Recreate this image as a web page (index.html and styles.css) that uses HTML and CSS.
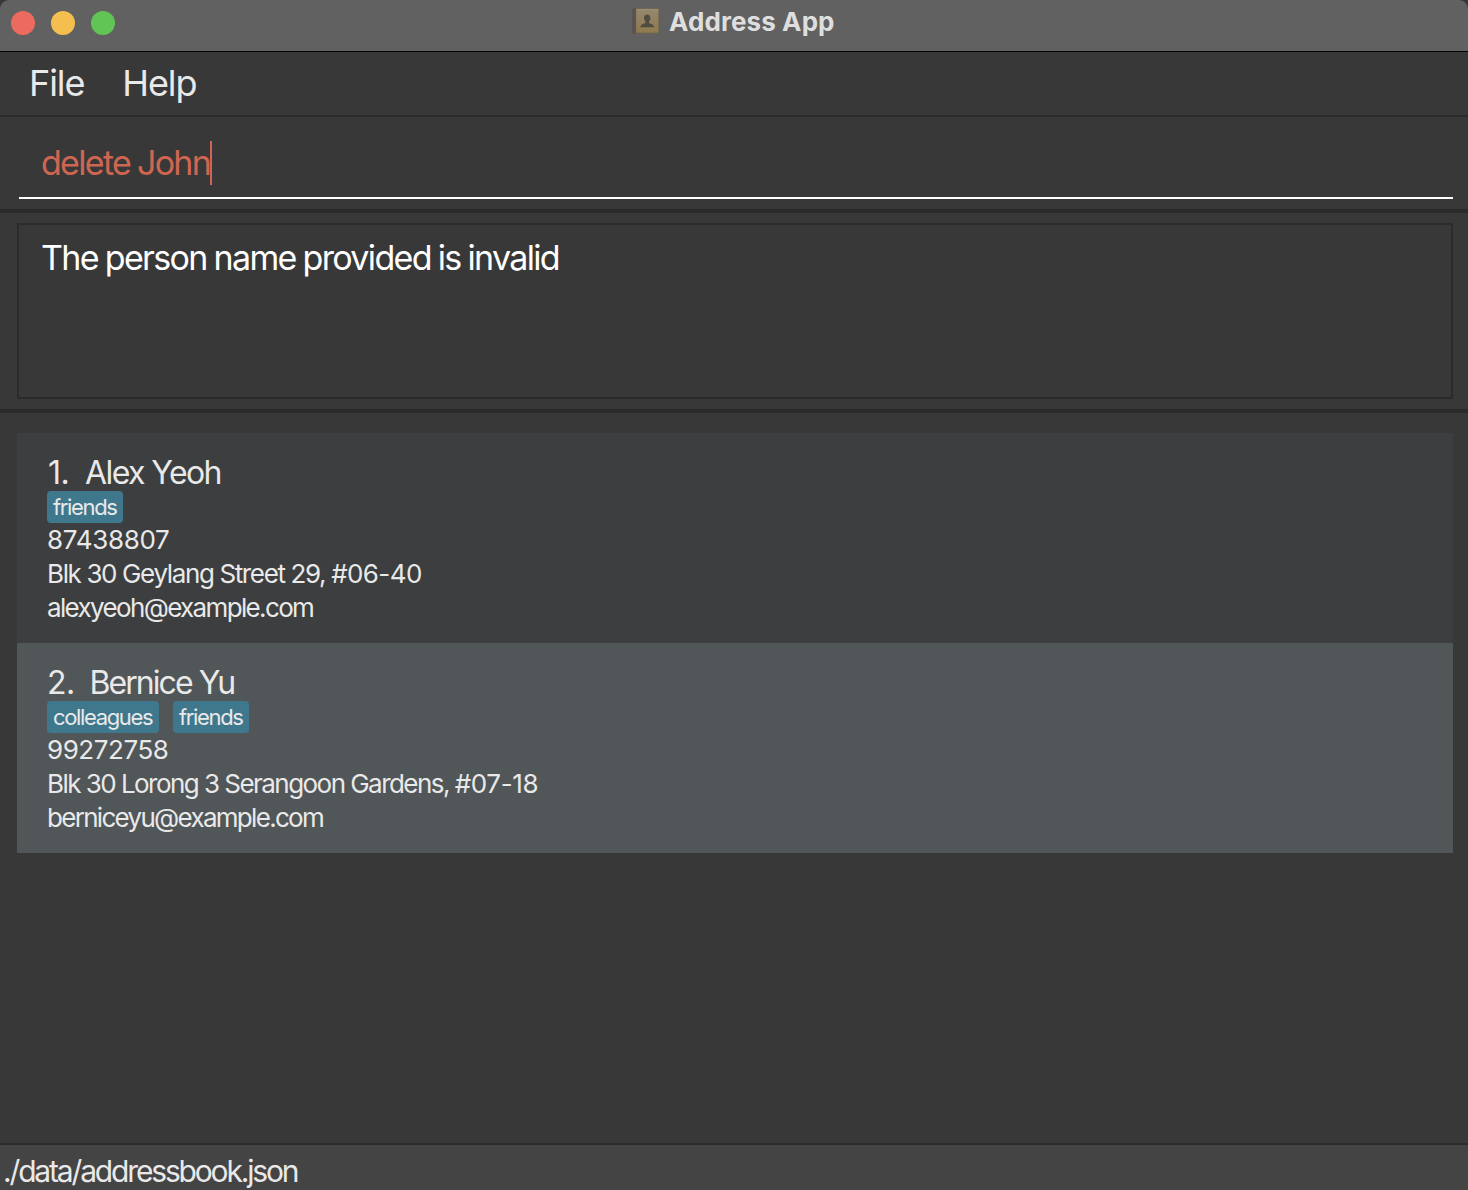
FILE: index.html
```html
<!DOCTYPE html>
<html lang="en">
<head>
<meta charset="utf-8">
<title>Address App</title>
<link rel="stylesheet" href="styles.css">
</head>
<body>
<div class="window">
  <header class="titlebar">
    <div class="lights"><span class="light close"></span><span class="light minimise"></span><span class="light zoom"></span></div>
    <svg class="app-icon" width="28" height="26" viewBox="0 0 28 26">
      <defs><linearGradient id="cover" x1="0" y1="0" x2="0" y2="1"><stop offset="0" stop-color="#978a70"/><stop offset="1" stop-color="#937b4e"/></linearGradient></defs>
      <rect x="0" y="0.3" width="7" height="25.4" rx="1.5" fill="#5b5350"/>
      <rect x="4" y="0.3" width="23" height="25.2" rx="1" fill="#75694f"/>
      <rect x="4.2" y="1.2" width="22" height="23.3" rx="0.6" fill="url(#cover)"/>
      <rect x="4.2" y="1.2" width="22" height="1" fill="#a1977f"/>
      <path d="M15.200 6.500c2 0 3.200 1.400 3.200 3.400 0 1.600-.7 2.800-1.500 3.600v1.300c.5 1 4.900 1.100 5.200 4.500H8.300c.3-3.400 4.700-3.500 5.200-4.500v-1.300c-.8-.8-1.500-2-1.500-3.600 0-2 1.200-3.400 3.200-3.400z" fill="#514b41"/>
    </svg>
    <h1 class="title">Address App</h1>
  </header>
  <nav class="menubar"><span>File</span><span>Help</span></nav>
  <section class="command"><div class="field"><span class="entry">delete John</span><span class="caret"></span></div></section>
  <section class="result"><div class="message">The person name provided is invalid</div></section>
  <main class="people">
    <article class="card">
      <h2 class="name"><span class="index">1.</span><span>Alex Yeoh</span></h2>
      <div class="tags"><span class="tag">friends</span></div>
      <p class="phone">87438807</p>
      <p class="address">Blk 30 Geylang Street 29, <span class="unit">#06-40</span></p>
      <p class="email">alexyeoh@example.com</p>
    </article>
    <article class="card even">
      <h2 class="name"><span class="index">2.</span><span>Bernice Yu</span></h2>
      <div class="tags"><span class="tag colleagues">colleagues</span><span class="tag">friends</span></div>
      <p class="phone">99272758</p>
      <p class="address">Blk 30 Lorong 3 Serangoon Gardens, <span class="unit">#07-18</span></p>
      <p class="email">berniceyu@example.com</p>
    </article>
  </main>
  <footer class="status">./data/addressbook.json</footer>
</div>
</body>
</html>
```
FILE: styles.css
```css
* { box-sizing: border-box; }
body { margin: 0; background: #383838; font-family: Inter, "Liberation Sans", sans-serif; }
h1, h2, p { margin: 0; font-weight: 400; }
.window { display: flex; flex-direction: column; height: 1190px; background: #383838; overflow: hidden; color: #e9e9e9; white-space: nowrap; }
.titlebar { position: relative; display: flex; flex: none; height: 52px; padding-left: 632px; background: #616161; border-bottom: 1px solid #000; border-radius: 9px 9px 0 0; }
.lights { position: absolute; left: 11px; top: 11px; display: flex; gap: 16px; }
.light { width: 24px; height: 24px; border-radius: 50%; }
.close { background: #ed6a5f; }
.minimise { background: #f5bf4f; }
.zoom { background: #61c555; }
.app-icon { flex: none; margin-top: 8px; opacity: .95; }
.title { margin-left: 9px; font-size: 26px; line-height: 43px; font-weight: 700; color: #dedede; letter-spacing: .1px; }
.menubar { display: flex; flex: none; height: 65px; padding-left: 29px; gap: 38px; border-bottom: 2px solid #2b2b2b; font-size: 36px; line-height: 62px; letter-spacing: -1.1px; }
.command { flex: none; height: 96px; padding: 11px 15px 0 19px; border-bottom: 4px solid #2b2b2b; }
.field { display: flex; height: 71px; padding-left: 22px; border-bottom: 2px solid #fff; font-size: 34px; line-height: 69px; color: #d06651; letter-spacing: -1.7px; word-spacing: -1px; }
.caret { width: 2px; height: 44px; margin-top: 13px; background: #d06651; }
.result { flex: none; height: 200px; padding: 10px 15px 10px 17px; border-bottom: 4px solid #2b2b2b; }
.message { height: 176px; padding: 12px 22px; border: 2px solid #2b2b2b; font-size: 34px; line-height: 41px; color: #fff; letter-spacing: -1.65px; word-spacing: -1.1px; }
.people { flex: 1; padding: 20px 15px 0 17px; }
.card { height: 210px; padding: 19px 30px 0; background: #3c3e3f; font-size: 26px; line-height: 34px; }
.card.even { background: #515658; }
.name { display: flex; gap: 16px; height: 39px; font-size: 32px; line-height: 41px; letter-spacing: -1.6px; }
.even .name { gap: 15px; letter-spacing: -1.95px; }
.name .index { padding-left: 1px; letter-spacing: -.6px; }
.even .name .index { padding-left: 0; }
.tags { display: flex; gap: 14px; height: 32px; }
.tag { width: 76px; padding-left: 6px; border-radius: 4px; background: #3f788d; font-size: 22px; line-height: 32px; letter-spacing: -1.35px; }
.tag.colleagues { width: 112px; }
.phone { letter-spacing: -.3px; }
.even .phone { letter-spacing: -.45px; }
.address { letter-spacing: -1.37px; }
.even .address { letter-spacing: -1.54px; }
.address .unit { letter-spacing: -.6px; }
.even .address .unit { letter-spacing: -.35px; }
.email { letter-spacing: -1.65px; }
.even .email { letter-spacing: -1.7px; }
.status { flex: none; height: 47px; padding: 6px 0 0 3px; border-top: 2px solid #2b2b2b; background: #444; font-size: 30px; line-height: 40px; letter-spacing: -2.16px; }
```
